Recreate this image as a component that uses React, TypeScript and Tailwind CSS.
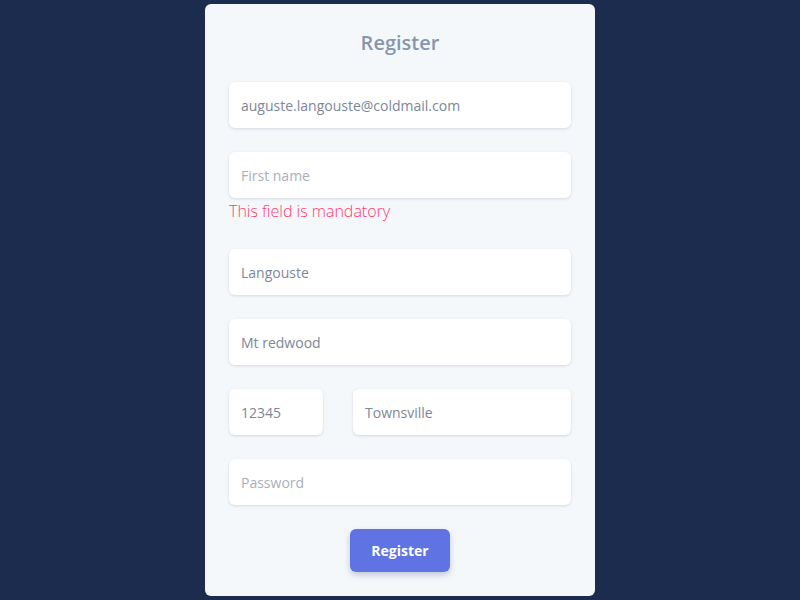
import React from "react";

const inputCls =
  "h-[46px] w-full rounded-[6px] bg-white px-3 text-[14px] text-[#7d8797] placeholder:text-[#a8b0bb] shadow-[0_1px_3px_rgba(20,40,80,0.15)] outline-none";

export default function App() {
  return (
    <div
      className="flex h-[600px] w-[800px] items-center justify-center bg-[#1b2c4e]"
      style={{ fontFamily: '"Open Sans", "Noto Sans", sans-serif' }}
    >
      <div className="flex h-[592px] w-[390px] flex-col rounded-[6px] bg-[#f5f8fb] px-6 pt-[25px]">
        <h1 className="text-center text-[20px] font-semibold leading-[28px] text-[#8796ab]">
          Register
        </h1>
        <input
          className={inputCls + " mt-[25px]"}
          defaultValue="auguste.langouste@coldmail.com"
        />
        <input className={inputCls + " mt-6"} placeholder="First name" />
        <div className="mt-px h-[24px] text-[16px] font-light leading-[24px] text-[#ff3b6b]">
          This field is mandatory
        </div>
        <input className={inputCls + " mt-[26px]"} defaultValue="Langouste" />
        <input className={inputCls + " mt-6"} defaultValue="Mt redwood" />
        <div className="mt-6 flex gap-[30px]">
          <input className={inputCls + " !w-[94px] shrink-0"} defaultValue="12345" />
          <input className={inputCls + " flex-1"} defaultValue="Townsville" />
        </div>
        <input className={inputCls + " mt-6"} placeholder="Password" type="password" />
        <div className="mt-6 flex justify-center">
          <button className="h-[43px] w-[100px] rounded-[6px] bg-[#5f73e3] text-[14px] font-bold text-white shadow-[0_3px_6px_rgba(40,50,120,0.25)]">
            Register
          </button>
        </div>
      </div>
    </div>
  );
}
